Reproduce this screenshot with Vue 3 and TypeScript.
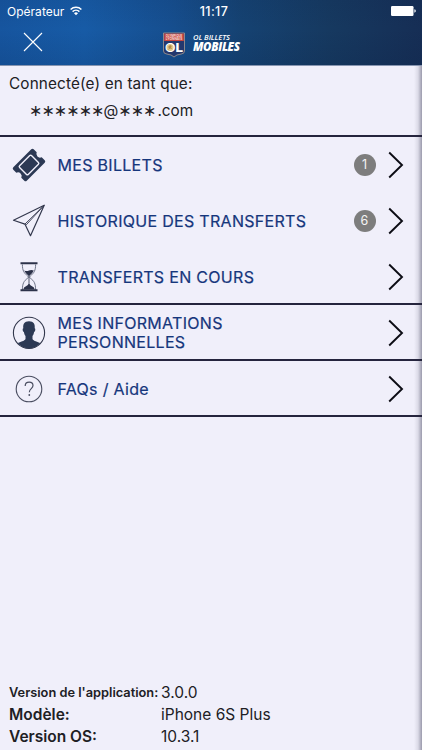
<script setup lang="ts">
type IconName = 'ticket' | 'plane' | 'hourglass' | 'person' | 'help'

interface MenuItem {
  icon: IconName
  label: string
  count?: number
  divided: boolean
}

const items: MenuItem[] = [
  { icon: 'ticket', label: 'MES BILLETS', count: 1, divided: false },
  { icon: 'plane', label: 'HISTORIQUE DES TRANSFERTS', count: 6, divided: false },
  { icon: 'hourglass', label: 'TRANSFERTS EN COURS', divided: true },
  { icon: 'person', label: 'MES INFORMATIONS PERSONNELLES', divided: true },
  { icon: 'help', label: 'FAQs / Aide', divided: true },
]

const details = [
  { label: "Version de l'application:", value: '3.0.0', small: true },
  { label: 'Modèle:', value: 'iPhone 6S Plus', small: false },
  { label: 'Version OS:', value: '10.3.1', small: false },
]
</script>

<template>
  <div class="screen">
    <header class="header">
      <div class="status">
        <div class="carrier">
          <span>Opérateur</span>
          <svg class="wifi" viewBox="0 0 12 10" width="12" height="10">
            <path d="M.6 3.500a7.700 7.700 0 0 1 10.800 0M2.600 5.600a4.900 4.900 0 0 1 6.800 0" fill="none" stroke="#fff" stroke-width="1.500" />
            <path d="M6 9.300 4 7.200a3 3 0 0 1 4 0z" fill="#fff" />
          </svg>
        </div>
        <span class="clock">11:17</span>
        <svg class="battery" viewBox="0 0 25 10" width="25" height="10">
          <rect width="22.500" height="10" rx="1.200" fill="#fff" />
          <path d="M23.400 3.300q1.400.3 1.400 1.700t-1.400 1.700z" fill="#fff" />
        </svg>
      </div>
      <div class="titlebar">
        <svg class="close" viewBox="0 0 20 20" width="20" height="20">
          <path d="M1 1l18 18M19 1L1 19" stroke="#fff" stroke-width="1.100" />
        </svg>
        <div class="brand">
          <svg class="crest" viewBox="0 0 22 26" width="22" height="26">
            <path d="M.5 1H21.500V19Q21.500 21.800 18 22.100Q13.500 22.400 11 25Q8.500 22.400 4 22.100Q.5 21.800.5 19Z" fill="#24386e" stroke="#a99a8f" stroke-width=".8" />
            <path d="M1.200 1.600H20.800V9H1.200z" fill="#c8463f" />
            <text x="11" y="4.900" font-size="3.300" font-weight="700" fill="#f4d9d5" text-anchor="middle" textLength="16.500" lengthAdjust="spacingAndGlyphs">OLYMPIQUE</text>
            <text x="11" y="8.400" font-size="3.300" font-weight="700" fill="#f4d9d5" text-anchor="middle" textLength="16.500" lengthAdjust="spacingAndGlyphs">LYONNAIS</text>
            <text x="2" y="20" font-size="12" font-weight="800" fill="#fff" textLength="18" lengthAdjust="spacingAndGlyphs">OL</text>
            <circle cx="7" cy="15.600" r="3.500" fill="#e3c88c" />
            <path d="M5 18l1-2-1-1 2-2 2 1-1 1 1 2-2-.5z" fill="#b28a4a" />
          </svg>
          <div class="wordmark">
            <span class="word-top">OL BILLETS</span>
            <span class="word-bottom">MOBILES</span>
          </div>
        </div>
      </div>
    </header>

    <main class="panel">
      <section class="account">
        <p class="connected">Connecté(e) en tant que:</p>
        <p class="email"><span class="stars">∗∗∗∗∗∗</span><span class="at">@</span><span class="stars">∗∗∗</span><span class="domain">.com</span></p>
      </section>

      <nav>
        <a v-for="item in items" :key="item.icon" class="item" :class="{ divided: item.divided }">
          <span class="icon">
            <svg v-if="item.icon === 'ticket'" viewBox="0 0 34 34" width="34" height="34">
              <g transform="rotate(-45 17 17)">
                <path d="M4.300 7.500H29.700Q31.400 7.500 31.400 9.200V13.500A3.700 3.700 0 0 0 31.400 20.500V24.800Q31.400 26.500 29.700 26.500H4.300Q2.600 26.500 2.600 24.800V20.500A3.700 3.700 0 0 0 2.600 13.500V9.200Q2.600 7.500 4.300 7.500Z" fill="#2c3954" />
                <rect x="8.600" y="10.900" width="16.800" height="12.200" rx="1.200" fill="none" stroke="#f0effa" stroke-width="1.400" />
              </g>
            </svg>
            <svg v-else-if="item.icon === 'plane'" viewBox="0 0 34 34" width="34" height="34" fill="none" stroke="#33384d" stroke-width="1.200" stroke-linejoin="round">
              <path d="M32.200 1.300L1.500 16.300L12.900 20.100L18.500 31.700Z" />
              <path d="M12.900 20.100L32.200 1.300M14.200 20.900L32.200 1.300" stroke-width=".9" />
            </svg>
            <svg v-else-if="item.icon === 'hourglass'" viewBox="0 0 34 34" width="34" height="34">
              <path d="M10.400 4.500C10.400 10.500 11.800 12.800 15.700 16C16.500 16.700 16.500 17.600 15.700 18.200C11.800 21 10.400 23.500 10.400 30M23.600 4.500C23.600 10.500 22.200 12.800 18.300 16C17.500 16.700 17.500 17.600 18.300 18.200C22.200 21 23.600 23.500 23.600 30" fill="none" stroke="#5f6579" stroke-width=".9" />
              <path d="M8.500 2.300H25.500V4.300H8.500zM8.500 29.300H25.500V31.300H8.500z" fill="#2c3249" />
              <path d="M12.200 10.500Q14.800 11.500 17 10.500T21.800 10.500Q20.900 13 17 16.200Q13.100 13 12.200 10.500zM16.600 16H17.400V24H16.600zM11.300 29.500Q11.700 27 13.600 26.400Q15.800 25.500 17 23.200Q18.200 25.500 20.400 26.400Q22.300 27 22.700 29.500z" fill="#2c3249" />
            </svg>
            <svg v-else-if="item.icon === 'person'" viewBox="0 0 34 34" width="34" height="34">
              <circle cx="17" cy="16.800" r="15.600" fill="none" stroke="#33384d" stroke-width="1.100" />
              <path d="M17 5.200C21.800 5.200 23.200 8.200 22.700 12.200C23.700 12.400 23.400 15.600 22.100 16.100C21.800 18.100 21.200 19.200 20.500 20.100V22.900C21.400 25.100 25.800 25.600 28.400 27.100Q24 32.400 17 32.400Q10 32.400 5.600 27.100C8.200 25.600 12.600 25.100 13.500 22.900V20.100C12.800 19.200 12.200 18.100 11.900 16.100C10.600 15.600 10.300 12.400 11.300 12.200C10.800 8.200 12.200 5.200 17 5.200Z" fill="#2c3954" />
            </svg>
            <svg v-else viewBox="0 0 34 34" width="34" height="34" fill="none" stroke="#494d60">
              <circle cx="17" cy="17" r="12.800" stroke-width="1.100" />
              <path d="M13.200 14C13.200 11.500 14.900 10.200 17.200 10.200C19.500 10.200 21 11.600 21 13.600C21 16.700 17.300 16.600 17.300 20.300" stroke-width="1.200" />
              <circle cx="17.300" cy="23" r=".9" fill="#494d60" stroke="none" />
            </svg>
          </span>
          <span class="label">{{ item.label }}</span>
          <span v-if="item.count" class="badge">{{ item.count }}</span>
          <svg class="chevron" viewBox="0 0 16 28" width="16" height="28">
            <path d="M1.200 1.500L14 14L1.200 26.500" fill="none" stroke="#0c0c14" stroke-width="1.900" />
          </svg>
        </a>
      </nav>

      <dl class="details">
        <div v-for="d in details" :key="d.label" class="detail">
          <dt :class="{ small: d.small }">{{ d.label }}</dt>
          <dd>{{ d.value }}</dd>
        </div>
      </dl>
    </main>
  </div>
</template>

<style>
body {
  margin: 0;
}
</style>

<style scoped>
.screen {
  box-sizing: border-box;
  display: flex;
  flex-direction: column;
  width: 100%;
  height: 750px;
  overflow: hidden;
  font-family: Inter, "Liberation Sans", sans-serif;
  color: #202024;
}
.header {
  flex: none;
  box-sizing: border-box;
  height: 66px;
  border-bottom: 1px solid #8795b0;
  color: #fff;
  background:
    linear-gradient(180deg, rgba(10, 30, 70, 0.08), transparent 45%, rgba(5, 25, 60, 0.12)),
    linear-gradient(90deg, #16559f 0%, #175ba6 20%, #164f90 40%, #154272 57%, #163960 78%, #162e55 100%);
}
.status {
  display: grid;
  grid-template-columns: 1fr auto 1fr;
  align-items: center;
  height: 22px;
  padding: 0 6px 0 7px;
  font-size: 12px;
}
.carrier {
  display: flex;
  align-items: center;
  gap: 6px;
  letter-spacing: 0.02px;
}
.wifi {
  margin-top: -1px;
}
.clock {
  padding-left: 5px;
  font-weight: 500;
  font-size: 12.500px;
  letter-spacing: 0.4px;
}
.battery {
  justify-self: end;
}
.titlebar {
  display: grid;
  grid-template-columns: 163px auto 1fr;
  align-items: center;
  height: 43px;
}
.close {
  margin: -3px 0 0 23px;
}
.brand {
  display: flex;
  align-items: center;
  gap: 8px;
}
.crest {
  margin-top: 2px;
  overflow: visible;
}
.wordmark {
  display: flex;
  flex-direction: column;
  margin-top: -2px;
  font-family: "Open Sans", "Noto Sans", sans-serif;
  font-style: italic;
  white-space: nowrap;
}
.word-top {
  font-size: 7.500px;
  line-height: 8px;
  font-weight: 600;
  letter-spacing: -0.02px;
}
.word-bottom {
  font-size: 11.500px;
  line-height: 11px;
  font-weight: 800;
  letter-spacing: -0.35px;
}
.panel {
  flex: 1;
  display: flex;
  flex-direction: column;
  background: linear-gradient(90deg, transparent calc(100% - 8px), rgba(70, 70, 95, 0.12) calc(100% - 4px), rgba(70, 70, 95, 0.5)), #f0effa;
}
.account {
  box-sizing: border-box;
  height: 71px;
  padding: 8px 9px 0;
  border-bottom: 2px solid #25243d;
}
.connected,
.email {
  margin: 0;
  font-size: 15.300px;
  line-height: 20px;
}
.connected {
  letter-spacing: 0.15px;
}
.email {
  display: flex;
  align-items: center;
  margin-top: 7px;
  padding-left: 20px;
}
.stars {
  font-family: "DejaVu Sans", sans-serif;
  font-size: 16px;
  letter-spacing: -1px;
}
.domain {
  padding-left: 2px;
}
.item {
  box-sizing: border-box;
  display: flex;
  align-items: center;
  height: 56px;
  padding: 0 18.500px 0 12px;
}
.divided {
  padding-top: 2px;
  border-bottom: 2px solid #25243d;
}
.icon {
  display: flex;
  flex: none;
  width: 34px;
}
.label {
  flex: 1;
  margin-left: 11.500px;
  color: #16367c;
  font-size: 16px;
  line-height: 19px;
  font-weight: 400;
  letter-spacing: 0.3px;
  -webkit-text-stroke: 0.2px #16367c;
}
.divided .label {
  padding-right: 80px;
}
.badge {
  flex: none;
  width: 22px;
  height: 22px;
  margin-right: 12px;
  border-radius: 50%;
  background: #7d7d7d;
  color: #f4f4f4;
  font-size: 12.500px;
  line-height: 22px;
  text-align: center;
}
.chevron {
  flex: none;
}
.details {
  margin: auto 0 2px;
  padding-left: 9px;
}
.detail {
  display: grid;
  grid-template-columns: 152px 1fr;
  align-items: center;
  height: 22.300px;
  font-size: 15.500px;
}
dt {
  font-weight: 600;
  white-space: nowrap;
}
dt.small {
  font-size: 12.800px;
}
dd {
  margin: 0;
}
</style>
